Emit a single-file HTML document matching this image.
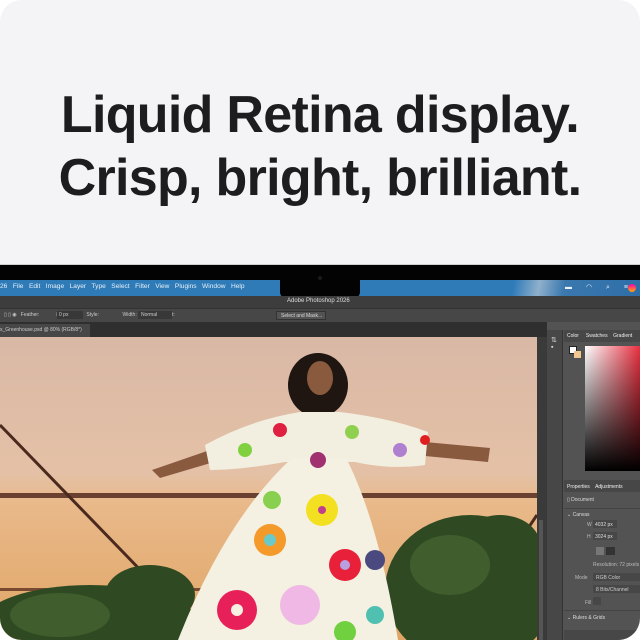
<!DOCTYPE html>
<html><head><meta charset="utf-8"><style>
*{margin:0;padding:0;box-sizing:border-box}
body{width:640px;height:640px;background:#fff;overflow:hidden;font-family:"Liberation Sans",sans-serif}
.card{position:absolute;left:0;top:0;width:640px;height:640px;border-radius:22px;overflow:hidden;background:#f4f4f6}
h1{position:absolute;left:0;width:640px;text-align:center;font-size:52px;font-weight:bold;color:#1d1d1f;letter-spacing:-0.7px;line-height:63px;top:84px}
.abs{position:absolute}
.menu{font-size:7px;color:#e8f0f8}
.t{font-size:5px;color:#bbb;position:absolute}
</style></head><body><div class="card">
<h1>Liquid Retina display.<br>Crisp, bright, brilliant.</h1>
<div class="abs" style="left:0;top:264px;width:640px;height:1px;background:#cfcfd2"></div>
<div class="abs" style="left:0;top:265px;width:640px;height:16px;background:#030303"></div>
<div class="abs" style="left:0;top:280px;width:640px;height:16px;background:linear-gradient(100deg,#2e7bb8 0%,#2e7bb8 80%,#8fb0cc 84%,#3a78ae 88%,#2e6ea8 100%)"></div>
<div class="abs" style="left:280px;top:265px;width:80px;height:33px;background:#030303;border-radius:0 0 6px 6px"></div>
<div class="abs" style="left:318px;top:276px;width:4px;height:4px;border-radius:50%;background:#1a1a22"></div>
<div class="abs menu" style="left:0;top:283px;white-space:pre;font-size:6.6px">26   File   Edit   Image   Layer   Type   Select   Filter   View   Plugins   Window   Help</div>
<div class="abs menu" style="left:565px;top:283px;font-size:7px;letter-spacing:6px">▬ ◠ ⌕ ≡</div>
<div class="abs" style="left:628px;top:284px;width:8px;height:8px;border-radius:50%;background:linear-gradient(#f0a,#fa0)"></div>
<div class="abs" style="left:0;top:296px;width:640px;height:12px;background:#3d3d3d"></div>
<div class="abs" style="left:287px;top:298px;font-size:6px;color:#ddd">Adobe Photoshop 2026</div>
<div class="abs" style="left:0;top:308px;width:640px;height:14px;background:#474747;border-top:1px solid #333"></div>
<div class="t" style="left:4px;top:312px;white-space:pre;color:#ccc">▯ ▯ ◉   Feather:            ☑ Anti-alias   Style:                 Width:           ⇄  Height:</div>
<div class="abs" style="left:57px;top:311px;width:26px;height:8px;background:#383838"></div>
<div class="abs" style="left:138px;top:311px;width:34px;height:8px;background:#383838"></div>
<div class="t" style="left:59px;top:312px;color:#ccc">0 px</div>
<div class="t" style="left:141px;top:312px;color:#ccc">Normal</div>
<div class="abs" style="left:276px;top:311px;width:50px;height:9px;background:#535353;border:1px solid #333"></div>
<div class="t" style="left:281px;top:313px;color:#ddd">Select and Mask...</div>
<div class="abs" style="left:0;top:322px;width:640px;height:15px;background:#2f2f2f"></div>
<div class="abs" style="left:0;top:324px;width:90px;height:13px;background:#474747"></div>
<div class="t" style="left:0;top:327px;color:#ccc">s_Greenhouse.psd @ 80% (RGB/8*)</div>
<svg class="abs" style="left:0;top:337px" width="537" height="303" viewBox="0 337 537 303">
<defs><linearGradient id="sky" x1="0" y1="0" x2="0" y2="1"><stop offset="0" stop-color="#d9b8a6"/><stop offset=".45" stop-color="#e4c1a6"/><stop offset=".55" stop-color="#e9b98a"/><stop offset="1" stop-color="#e0a565"/></linearGradient></defs>
<rect x="0" y="337" width="537" height="303" fill="url(#sky)"/>
<rect x="0" y="493" width="537" height="5" fill="#6a4030"/>
<rect x="0" y="588" width="537" height="3" fill="#7a4a30"/>
<line x1="0" y1="425" x2="150" y2="580" stroke="#4a2a1e" stroke-width="3"/>
<line x1="537" y1="515" x2="500" y2="570" stroke="#4a2a1e" stroke-width="3"/>
<g fill="#2f4a22"><ellipse cx="90" cy="625" rx="110" ry="40"/><ellipse cx="150" cy="595" rx="45" ry="30"/><ellipse cx="470" cy="590" rx="85" ry="75"/><ellipse cx="500" cy="545" rx="40" ry="30"/></g>
<g fill="#4d6b35" opacity=".6"><ellipse cx="60" cy="615" rx="50" ry="22"/><ellipse cx="450" cy="565" rx="40" ry="30"/></g>
<ellipse cx="318" cy="385" rx="30" ry="32" fill="#1f1612"/>
<ellipse cx="320" cy="378" rx="13" ry="17" fill="#8a5a3e"/>
<path d="M152 470 L210 450 L214 462 L160 478Z" fill="#8a5a3e"/>
<path d="M425 442 L490 448 L488 462 L425 456Z" fill="#8a5a3e"/>
<path d="M205 445 Q250 420 300 412 L340 412 Q390 418 428 432 L425 465 Q390 470 355 462 L285 462 Q240 470 210 470Z" fill="#f2efe0"/>
<path d="M292 458 L346 458 Q378 520 398 640 L178 640 Q225 520 292 458Z" fill="#f4f0e2"/>
<g><circle cx="270" cy="540" r="16" fill="#f39a2a"/><circle cx="270" cy="540" r="6" fill="#6ac9c9"/>
<circle cx="322" cy="510" r="16" fill="#f3e020"/><circle cx="322" cy="510" r="4" fill="#c04090"/>
<circle cx="345" cy="565" r="16" fill="#e8203a"/><circle cx="345" cy="565" r="5" fill="#b8a0e0"/>
<circle cx="237" cy="610" r="20" fill="#e8205a"/><circle cx="237" cy="610" r="6" fill="#f8f0e0"/>
<circle cx="300" cy="605" r="20" fill="#f0b8e4"/>
<circle cx="375" cy="560" r="10" fill="#4a4a80"/><circle cx="375" cy="615" r="9" fill="#50c0b0"/>
<circle cx="345" cy="632" r="11" fill="#70d040"/><circle cx="272" cy="500" r="9" fill="#8ad050"/>
<circle cx="318" cy="460" r="8" fill="#a03070"/><circle cx="280" cy="430" r="7" fill="#e02040"/>
<circle cx="352" cy="432" r="7" fill="#90d050"/><circle cx="245" cy="450" r="7" fill="#80d040"/><circle cx="400" cy="450" r="7" fill="#b080d0"/><circle cx="425" cy="440" r="5" fill="#e02020"/></g>
</svg>
<div class="abs" style="left:537px;top:337px;width:10px;height:303px;background:#3a3a3a"></div>
<div class="abs" style="left:539px;top:520px;width:4px;height:120px;background:#555"></div>
<div class="abs" style="left:547px;top:322px;width:93px;height:318px;background:#535353"></div>
<div class="abs" style="left:547px;top:330px;width:16px;height:310px;background:#474747;border-right:1px solid #333"></div>
<div class="t" style="left:551px;top:336px;font-size:7px;color:#ddd">⇅<br>▪</div>
<div class="abs" style="left:564px;top:330px;width:76px;height:12px;background:#474747"></div>
<div class="t" style="left:567px;top:333px;color:#eee;white-space:pre">Color     Swatches    Gradient</div>
<div class="abs" style="left:569px;top:346px;width:8px;height:8px;background:#fff;border:1px solid #222"></div>
<div class="abs" style="left:574px;top:351px;width:7px;height:7px;background:#f0c890"></div>
<div class="abs" style="left:585px;top:346px;width:55px;height:125px;background:linear-gradient(to bottom,transparent,#000),linear-gradient(to right,#fff,#e83040)"></div>
<div class="abs" style="left:564px;top:480px;width:76px;height:12px;background:#474747"></div>
<div class="t" style="left:567px;top:484px;color:#eee;white-space:pre">Properties    Adjustments</div>
<div class="t" style="left:567px;top:497px;color:#ddd">▯ Document</div>
<div class="abs" style="left:564px;top:508px;width:76px;height:1px;background:#444"></div>
<div class="t" style="left:567px;top:512px;color:#ddd">⌄ Canvas</div>
<div class="t" style="left:587px;top:522px">W</div><div class="abs" style="left:593px;top:520px;width:24px;height:8px;background:#474747"></div><div class="t" style="left:595px;top:522px;color:#ddd">4032 px</div>
<div class="t" style="left:587px;top:534px">H</div><div class="abs" style="left:593px;top:532px;width:24px;height:8px;background:#474747"></div><div class="t" style="left:595px;top:534px;color:#ddd">3024 px</div>
<div class="abs" style="left:596px;top:547px;width:8px;height:8px;background:#777"></div><div class="abs" style="left:606px;top:547px;width:9px;height:8px;background:#333"></div>
<div class="t" style="left:593px;top:562px">Resolution: 72 pixels</div>
<div class="t" style="left:575px;top:575px">Mode</div><div class="abs" style="left:593px;top:573px;width:47px;height:8px;background:#474747"></div><div class="t" style="left:596px;top:575px;color:#ccc">RGB Color</div>
<div class="abs" style="left:593px;top:585px;width:47px;height:8px;background:#474747"></div><div class="t" style="left:596px;top:587px;color:#ccc">8 Bits/Channel</div>
<div class="t" style="left:585px;top:600px">Fill</div><div class="abs" style="left:593px;top:597px;width:8px;height:8px;background:#474747"></div>
<div class="abs" style="left:564px;top:610px;width:76px;height:1px;background:#444"></div>
<div class="t" style="left:567px;top:615px;color:#ddd">⌄ Rulers &amp; Grids</div>
<div class="abs" style="left:564px;top:630px;width:76px;height:10px;background:#474747"></div>
</div></body></html>
